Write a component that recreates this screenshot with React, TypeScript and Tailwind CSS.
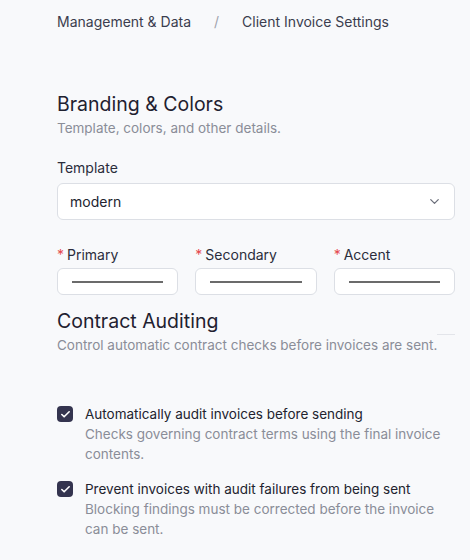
import { Check, ChevronDown } from "lucide-react";

const font = { fontFamily: "Inter, 'Noto Sans', sans-serif" };

function ColorField({ label }: { label: string }) {
  return (
    <div className="flex flex-col">
      <label className="flex h-[20px] items-center text-[14px] text-[#2b2d3c]">
        <span className="mr-[3px] text-[#e5484d]">*</span>
        {label}
      </label>
      <div className="mt-[4px] flex h-[27px] items-center justify-center rounded-[6px] border border-[#dcdfe5] bg-white px-[14px]">
        <div className="h-[2px] w-full bg-[#6b6b6b]" />
      </div>
    </div>
  );
}

function AuditOption({ title, desc }: { title: string; desc: string }) {
  return (
    <div className="flex items-start gap-[12px]">
      <div className="mt-[2px] flex h-[16px] w-[16px] shrink-0 items-center justify-center rounded-[4px] bg-[#34344f]">
        <Check className="h-[11px] w-[11px] text-white" strokeWidth={3.5} />
      </div>
      <div className="flex flex-col">
        <span className="text-[13.5px] leading-[20px] text-[#22232f]">{title}</span>
        <span className="text-[13.5px] leading-[20px] text-[#8a8d98]">{desc}</span>
      </div>
    </div>
  );
}

export default function App() {
  return (
    <main className="min-h-[560px] bg-[#f8f9fb]" style={font}>
      <div className="w-[455px] pl-[57px]">
        <nav className="flex h-[42px] items-center text-[14px] text-[#3b3d4e]">
          <span>Management &amp; Data</span>
          <span className="mx-[23px] text-[#a0a3ad]">/</span>
          <span>Client Invoice Settings</span>
        </nav>

        <section className="mt-[49px]">
          <h2 className="text-[19.5px] leading-[26px] text-[#1f2130]">Branding &amp; Colors</h2>
          <p className="mt-[2px] text-[13.5px] leading-[18px] text-[#8a8d98]">Template, colors, and other details.</p>

          <label className="mt-[21px] block text-[14px] leading-[20px] text-[#2b2d3c]">Template</label>
          <div className="mt-[5px] flex h-[37px] items-center justify-between rounded-[6px] border border-[#dcdfe5] bg-white pl-[12px] pr-[12px]">
            <span className="text-[14px] text-[#22232f]">modern</span>
            <ChevronDown className="h-[15px] w-[15px] text-[#6b6e7a]" strokeWidth={2} />
          </div>

          <div className="mt-[24px] grid grid-cols-3 gap-[17px]">
            <ColorField label="Primary" />
            <ColorField label="Secondary" />
            <ColorField label="Accent" />
          </div>
        </section>

        <section className="mt-[13px]">
          <div className="flex items-end justify-between">
            <h2 className="text-[19.5px] leading-[26px] text-[#1f2130]">Contract Auditing</h2>
            <div className="mb-[-1px] h-px w-[18px] bg-[#e3e5ea]" />
          </div>
          <p className="mt-[2px] text-[13.5px] leading-[18px] text-[#8a8d98]">
            Control automatic contract checks before invoices are sent.
          </p>

          <div className="mt-[50px] flex flex-col gap-[15px]">
            <AuditOption
              title="Automatically audit invoices before sending"
              desc="Checks governing contract terms using the final invoice contents."
            />
            <AuditOption
              title="Prevent invoices with audit failures from being sent"
              desc="Blocking findings must be corrected before the invoice can be sent."
            />
          </div>
        </section>
      </div>
    </main>
  );
}
